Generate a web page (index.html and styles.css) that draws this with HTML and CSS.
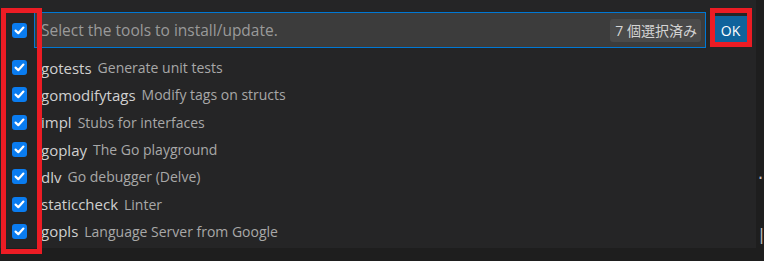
FILE: index.html
```html
<!DOCTYPE html>
<html lang="ja">
<head>
    <meta charset="UTF-8">
    <title>Go: Install/Update Tools</title>
    <link rel="stylesheet" href="styles.css">
</head>
<body>
    <div class="screen">
        <div class="picker">
            <div class="picker-head">
                <span class="check"></span>
                <div class="filter">
                    <span class="placeholder">Select the tools to install/update.</span>
                    <span class="count">7 個選択済み</span>
                </div>
                <button class="ok">OK</button>
            </div>
            <ul class="tools">
                <li><span class="check"></span><span class="name">gotests</span><span class="desc">Generate unit tests</span></li>
                <li><span class="check"></span><span class="name">gomodifytags</span><span class="desc">Modify tags on structs</span></li>
                <li><span class="check"></span><span class="name">impl</span><span class="desc">Stubs for interfaces</span></li>
                <li><span class="check"></span><span class="name">goplay</span><span class="desc">The Go playground</span></li>
                <li><span class="check"></span><span class="name">dlv</span><span class="desc">Go debugger (Delve)</span></li>
                <li><span class="check"></span><span class="name">staticcheck</span><span class="desc">Linter</span></li>
                <li><span class="check"></span><span class="name">gopls</span><span class="desc">Language Server from Google</span></li>
            </ul>
        </div>
        <div class="editor">
            <span class="code-a">.c</span>
            <span class="code-b">|</span>
        </div>
        <div class="mark-checks"></div>
        <div class="mark-ok"></div>
    </div>
</body>
</html>
```
FILE: styles.css
```css
body {
    margin: 0;
    background-color: #1e1e1e;
    font-family: "Open Sans", "Noto Sans CJK JP", sans-serif;
}
.screen {
    position: relative;
    display: flex;
    width: 764px;
    height: 261px;
    overflow: hidden;
}
.picker {
    width: 756px;
    height: 248px;
    background-color: #252526;
    box-sizing: border-box;
    padding-top: 12px;
}
.picker-head {
    display: flex;
    align-items: center;
    height: 36px;
}
.check {
    flex: none;
    width: 15px;
    height: 15px;
    margin-left: 12px;
    margin-right: 7px;
    border-radius: 3px;
    background-color: #0a7cf0;
    background-image: url("data:image/svg+xml,%3Csvg xmlns='http://www.w3.org/2000/svg' viewBox='0 0 15 15'%3E%3Cpath d='M3.6 7.6 6.3 10.2 11.4 4.6' fill='none' stroke='white' stroke-width='2.2' stroke-linecap='round' stroke-linejoin='round'/%3E%3C/svg%3E");
}
.filter {
    display: flex;
    align-items: center;
    justify-content: space-between;
    width: 672px;
    height: 36px;
    box-sizing: border-box;
    border: 1px solid #0078d4;
    background-color: #3c3c3c;
    padding: 0 4px 0 6px;
}
.placeholder {
    color: #9a9a9a;
    font-size: 15.5px;
}
.count {
    background-color: #4a4a4a;
    color: #d4d4d4;
    font-size: 14px;
    line-height: 23px;
    padding: 0 4px 0 5px;
    border-radius: 3px;
}
.ok {
    margin-left: 8px;
    width: 33px;
    height: 28px;
    padding: 0;
    border: none;
    background-color: #0e639c;
    color: #ffffff;
    font-family: inherit;
    font-size: 14px;
}
.tools {
    list-style: none;
    margin: 6px 0 0;
    padding: 0;
}
.tools li {
    display: flex;
    align-items: center;
    height: 27.3px;
}
.tools .check {
    margin-right: 14px;
}
.name {
    color: #d0d0d0;
    font-size: 15px;
    margin-right: 6px;
}
.desc {
    color: #a8a8a8;
    font-size: 14px;
}
.editor {
    position: relative;
    flex: 1;
    overflow: hidden;
    color: #bbbbbb;
    font-family: "DejaVu Sans Mono", monospace;
    font-size: 15px;
}
.code-a {
    position: absolute;
    left: 0;
    top: 165px;
}
.code-b {
    position: absolute;
    left: 1px;
    top: 226px;
}
.mark-checks {
    position: absolute;
    left: 1px;
    top: 8px;
    width: 31px;
    height: 236px;
    border: 5px solid #ec1c24;
}
.mark-ok {
    position: absolute;
    left: 710px;
    top: 8px;
    width: 32px;
    height: 29px;
    border: 5px solid #ec1c24;
}
```
